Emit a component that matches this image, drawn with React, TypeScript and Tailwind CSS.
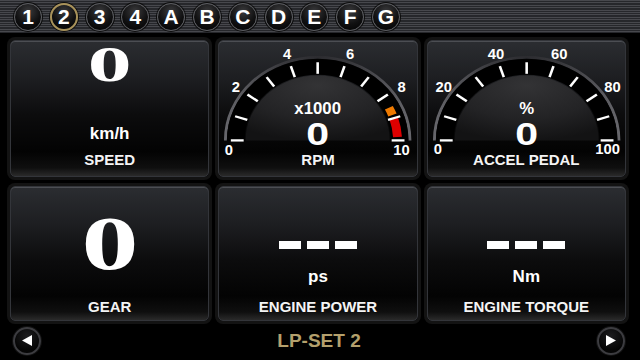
import React from "react";

const circles = ["1", "2", "3", "4", "A", "B", "C", "D", "E", "F", "G"];

const panelCls =
  "relative flex flex-col items-center rounded-[5px] border border-[#33353a] bg-[linear-gradient(180deg,#2b2d31_0%,#1d1e21_28%,#0c0c0d_55%,#030303_82%,#0f0f0f_94%,#2a2a2a_100%)] shadow-[0_0_0_3px_#131313,inset_0_1px_0_#4c4e53]";

const labelCls = "block shrink-0 text-[15px] leading-none font-bold text-[#f4f4f4] whitespace-nowrap";

type GaugeProps = {
  id: string;
  labels: { t: string; x: number; y: number }[];
  unit: string;
  zones?: { a: number; b: number; color: string }[];
};

function pt(v: number, r: number) {
  const th = Math.PI - (v / 10) * Math.PI;
  return [r * Math.cos(th), -r * Math.sin(th)];
}

function Gauge({ id, labels, unit, zones = [] }: GaugeProps) {
  const ticks = Array.from({ length: 11 }, (_, i) => i);
  return (
    <svg viewBox="0 0 200 111" className="block shrink-0 w-full h-[111px] overflow-visible">
      <defs>
        <linearGradient id={`rim-${id}`} x1="0" y1="0" x2="1" y2="0">
          <stop offset="0" stopColor="#66666b" />
          <stop offset="0.3" stopColor="#3a3a3e" />
          <stop offset="0.5" stopColor="#2c2c30" />
          <stop offset="0.7" stopColor="#3a3a3e" />
          <stop offset="1" stopColor="#66666b" />
        </linearGradient>
        <radialGradient id={`dome-${id}`} cx="0.5" cy="0.15" r="0.85">
          <stop offset="0" stopColor="#333335" />
          <stop offset="0.6" stopColor="#232325" />
          <stop offset="1" stopColor="#131314" />
        </radialGradient>
      </defs>
      <g transform="translate(100 100) scale(1 0.9)">
        <path d="M -93.5 0 A 93.5 93.5 0 0 1 93.5 0" fill="none" stroke={`url(#rim-${id})`} strokeWidth="3" />
        <path d="M -92 0 A 92 92 0 0 1 92 0 L 74 0 A 74 74 0 0 0 -74 0 Z" fill="#000" />
        <path d="M -73 0 A 73 73 0 0 1 73 0 Z" fill={`url(#dome-${id})`} />
        {zones.map((z, i) => {
          const [x1, y1] = pt(z.a, 81);
          const [x2, y2] = pt(z.b, 81);
          return (
            <path
              key={i}
              d={`M ${x1} ${y1} A 81 81 0 0 1 ${x2} ${y2}`}
              fill="none"
              stroke={z.color}
              strokeWidth="9"
            />
          );
        })}
        {ticks.map((i) => {
          const [x1, y1] = pt(i, 75);
          const [x2, y2] = pt(i, 88);
          return <line key={i} x1={x1} y1={y1} x2={x2} y2={y2} stroke="#fff" strokeWidth="2.6" />;
        })}
      </g>
      <g fill="#fff" fontFamily="'Liberation Sans', Arial, sans-serif" fontWeight="bold" textAnchor="middle">
        {labels.map((l) => (
          <text key={l.t} x={l.x} y={l.y + 5.5} fontSize="15">
            {l.t}
          </text>
        ))}
        <text x="100" y="73" fontSize="17">
          {unit}
        </text>
        <text transform="translate(100 105) scale(1.3 1)" fontSize="32">
          0
        </text>
      </g>
    </svg>
  );
}

function Circle({ t, active }: { t: string; active?: boolean }) {
  return (
    <div
      className={
        "flex items-center justify-center w-[28px] h-[28px] rounded-full bg-[radial-gradient(circle_at_50%_28%,#3a3a3c_0%,#111112_55%,#000_100%)] shadow-[0_0_0_1px_#0c0c0c] " +
        (active ? "border-2 border-[#a8925a]" : "border-[1.5px] border-[#5d5e62]")
      }
    >
      <span className="text-[21px] leading-none font-bold text-white">{t}</span>
    </div>
  );
}

function Arrow({ dir }: { dir: "l" | "r" }) {
  return (
    <div className="flex items-center justify-center w-[28px] h-[28px] rounded-full bg-[radial-gradient(circle_at_50%_30%,#1c1c1e_0%,#050505_70%)] border-2 border-[#3c3c40] shadow-[0_0_0_1px_#111]">
      <svg width="10" height="11" viewBox="0 0 10 11">
        {dir === "l" ? (
          <polygon points="0,5.5 10,0 10,11" fill="#fff" />
        ) : (
          <polygon points="10,5.5 0,0 0,11" fill="#fff" />
        )}
      </svg>
    </div>
  );
}

function Dashes({ unit, label }: { unit: string; label: string }) {
  return (
    <>
      <div className="mt-[54px] shrink-0 flex gap-[6px]">
        <div className="w-[22px] h-[8px] bg-white" />
        <div className="w-[22px] h-[8px] bg-white" />
        <div className="w-[22px] h-[8px] bg-white" />
      </div>
      <span className="mt-[19px] block shrink-0 text-[17px] leading-none font-bold text-white">{unit}</span>
      <span className={"mt-[14px] " + labelCls}>{label}</span>
    </>
  );
}

export default function App() {
  return (
    <div className="w-[640px] h-[360px] overflow-hidden bg-black flex flex-col font-['Liberation_Sans',Arial,sans-serif]">
      <div className="h-[33px] shrink-0 flex items-center gap-[7.8px] pl-[14px] bg-[repeating-linear-gradient(180deg,#47484d_0px,#47484d_1px,#26272b_1px,#26272b_2.4px)]">
        {circles.map((c) => (
          <Circle key={c} t={c} active={c === "2"} />
        ))}
      </div>

      <div className="mt-[7px] shrink-0 pl-[10px] pr-[14px] grid grid-cols-3 grid-rows-[137px_135px] gap-[9px]">
        {/* SPEED */}
        <div className={panelCls}>
          <div className="shrink-0 h-[51px] flex justify-center">
            <span className="block text-[51px] leading-[47px] font-bold text-white font-['Liberation_Serif',serif] scale-x-[1.72]">
              0
            </span>
          </div>
          <span className="mt-[33px] block shrink-0 text-[17px] leading-none font-bold text-white">km/h</span>
          <span className={"mt-[10px] " + labelCls}>SPEED</span>
        </div>

        {/* RPM */}
        <div className={panelCls}>
          <Gauge
            id="rpm"
            unit="x1000"
            labels={[
              { t: "0", x: 10, y: 109 },
              { t: "2", x: 17, y: 45 },
              { t: "4", x: 69, y: 12 },
              { t: "6", x: 133, y: 12 },
              { t: "8", x: 185, y: 45 },
              { t: "10", x: 185, y: 109 },
            ]}
            zones={[
              { a: 8.5, b: 8.85, color: "#ef7a00" },
              { a: 9.03, b: 9.85, color: "#e00000" },
            ]}
          />
          <span className={labelCls}>RPM</span>
        </div>

        {/* ACCEL */}
        <div className={panelCls}>
          <Gauge
            id="acc"
            unit="%"
            labels={[
              { t: "0", x: 10, y: 108 },
              { t: "20", x: 16, y: 45 },
              { t: "40", x: 69, y: 12 },
              { t: "60", x: 133, y: 12 },
              { t: "80", x: 187, y: 45 },
              { t: "100", x: 182, y: 108 },
            ]}
          />
          <span className={labelCls}>ACCEL PEDAL</span>
        </div>

        {/* GEAR */}
        <div className={panelCls}>
          <div className="mt-[18px] shrink-0 h-[76px] flex justify-center">
            <span className="block text-[76px] leading-none font-bold text-white font-['Liberation_Serif',serif] scale-x-[1.5]">
              0
            </span>
          </div>
          <span className={"mt-[18px] " + labelCls}>GEAR</span>
        </div>

        {/* ENGINE POWER */}
        <div className={panelCls}>
          <Dashes unit="ps" label="ENGINE POWER" />
        </div>

        {/* ENGINE TORQUE */}
        <div className={panelCls}>
          <Dashes unit="Nm" label="ENGINE TORQUE" />
        </div>
      </div>

      <div className="flex-1 flex items-center justify-between pl-[13px] pr-[15px]">
        <Arrow dir="l" />
        <span className="text-[19px] leading-none font-bold text-[#b4a06c]">LP-SET 2</span>
        <Arrow dir="r" />
      </div>
    </div>
  );
}
